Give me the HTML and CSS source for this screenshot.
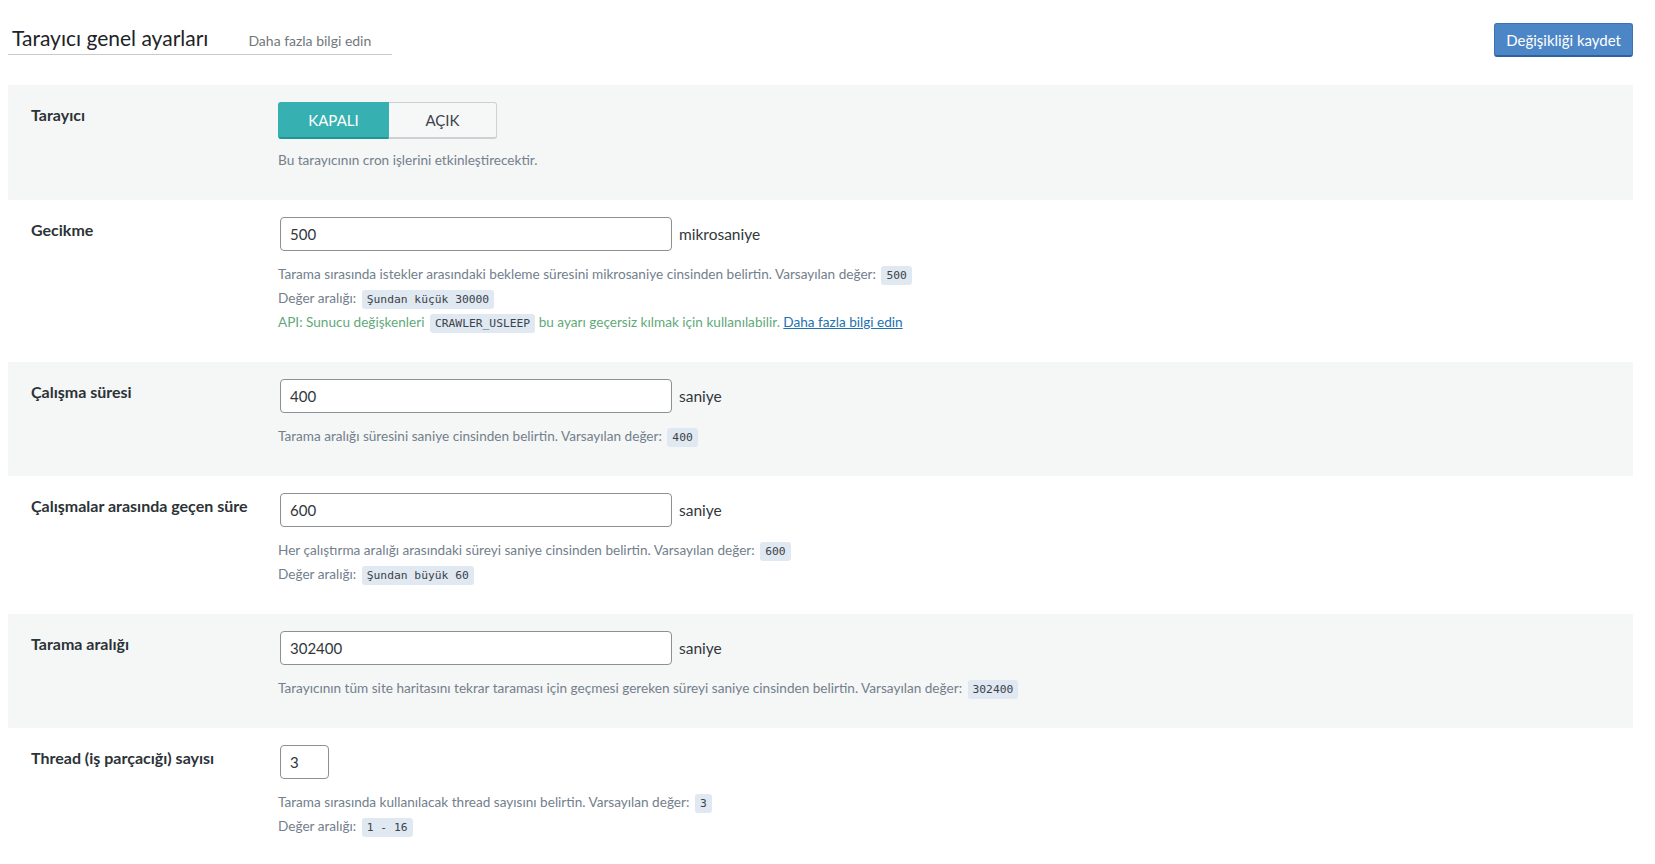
FILE: index.html
```html
<!DOCTYPE html>
<html lang="tr">
<head>
    <meta charset="UTF-8">
    <meta name="viewport" content="width=device-width, initial-scale=1.0">
    <title>Tarayıcı genel ayarları</title>
    <link rel="stylesheet" href="styles.css">
</head>
<body>
    <div class="wrap">
        <div class="page-head">
            <div class="title-bar">
                <h1>Tarayıcı genel ayarları</h1>
                <a href="#" class="learn-more">Daha fazla bilgi edin</a>
            </div>
            <button type="button" class="btn-save">Değişikliği kaydet</button>
        </div>

        <div class="setting gray">
            <div class="setting-label">Tarayıcı</div>
            <div class="setting-field">
                <div class="switch">
                    <span class="switch-opt active">KAPALI</span>
                    <span class="switch-opt">AÇIK</span>
                </div>
                <div class="desc desc-switch">
                    <p>Bu tarayıcının cron işlerini etkinleştirecektir.</p>
                </div>
            </div>
        </div>

        <div class="setting">
            <div class="setting-label">Gecikme</div>
            <div class="setting-field">
                <div class="input-line">
                    <input type="text" class="num-input" value="500">
                    <span class="unit">mikrosaniye</span>
                </div>
                <div class="desc">
                    <p>Tarama sırasında istekler arasındaki bekleme süresini mikrosaniye cinsinden belirtin. Varsayılan değer: <code>500</code></p>
                    <p>Değer aralığı: <code>Şundan küçük 30000</code></p>
                    <p class="api">API: Sunucu değişkenleri <code>CRAWLER_USLEEP</code> bu ayarı geçersiz kılmak için kullanılabilir. <a href="#">Daha fazla bilgi edin</a></p>
                </div>
            </div>
        </div>

        <div class="setting gray">
            <div class="setting-label">Çalışma süresi</div>
            <div class="setting-field">
                <div class="input-line">
                    <input type="text" class="num-input" value="400">
                    <span class="unit">saniye</span>
                </div>
                <div class="desc">
                    <p>Tarama aralığı süresini saniye cinsinden belirtin. Varsayılan değer: <code>400</code></p>
                </div>
            </div>
        </div>

        <div class="setting">
            <div class="setting-label">Çalışmalar arasında geçen süre</div>
            <div class="setting-field">
                <div class="input-line">
                    <input type="text" class="num-input" value="600">
                    <span class="unit">saniye</span>
                </div>
                <div class="desc">
                    <p>Her çalıştırma aralığı arasındaki süreyi saniye cinsinden belirtin. Varsayılan değer: <code>600</code></p>
                    <p>Değer aralığı: <code>Şundan büyük 60</code></p>
                </div>
            </div>
        </div>

        <div class="setting gray">
            <div class="setting-label">Tarama aralığı</div>
            <div class="setting-field">
                <div class="input-line">
                    <input type="text" class="num-input" value="302400">
                    <span class="unit">saniye</span>
                </div>
                <div class="desc">
                    <p>Tarayıcının tüm site haritasını tekrar taraması için geçmesi gereken süreyi saniye cinsinden belirtin. Varsayılan değer: <code>302400</code></p>
                </div>
            </div>
        </div>

        <div class="setting">
            <div class="setting-label">Thread (iş parçacığı) sayısı</div>
            <div class="setting-field">
                <div class="input-line">
                    <input type="text" class="num-input small" value="3">
                </div>
                <div class="desc">
                    <p>Tarama sırasında kullanılacak thread sayısını belirtin. Varsayılan değer: <code>3</code></p>
                    <p>Değer aralığı: <code>1 - 16</code></p>
                </div>
            </div>
        </div>
    </div>
</body>
</html>
```

FILE: styles.css
```css
* {
    box-sizing: border-box;
    margin: 0;
    padding: 0;
}

body {
    font-family: Lato, "Liberation Sans", sans-serif;
    color: #23282d;
    background-color: #fff;
}

.wrap {
    padding: 0 22px 0 8px;
}

.page-head {
    display: flex;
    justify-content: space-between;
    align-items: flex-start;
    margin-bottom: 28px;
}

.title-bar {
    display: flex;
    align-items: baseline;
    width: 384px;
    margin-top: 24px;
    padding: 0 0 3px 4px;
    border-bottom: 1px solid #c8cbcf;
}

h1 {
    font-size: 21px;
    font-weight: 400;
    line-height: 27px;
    color: #1d2327;
    margin-right: 40px;
}

.learn-more {
    font-size: 14px;
    color: #72777c;
    text-decoration: none;
}

.btn-save {
    margin-top: 23px;
    height: 34px;
    padding: 0 11px;
    font-family: inherit;
    font-size: 15px;
    color: #fff;
    background-color: #4c86c6;
    border: 1px solid #3a73b5;
    border-bottom-width: 2px;
    border-bottom-color: #2d62a0;
    border-radius: 3px;
    cursor: pointer;
}

.setting {
    display: grid;
    grid-template-columns: 270px 1fr;
    padding: 17px 0 28px;
}

.setting.gray {
    background-color: #f5f6f6;
}

.setting-label {
    padding-left: 23px;
    margin-top: 3px;
    font-size: 16px;
    font-weight: 700;
    line-height: 20px;
    color: #2c3338;
}

.switch {
    display: inline-flex;
    height: 37px;
}

.switch-opt {
    display: flex;
    align-items: center;
    justify-content: center;
    width: 108px;
    font-size: 15px;
    color: #3c434a;
    background-color: #f6f7f7;
    border: 1px solid #cdd0d4;
    border-left: none;
    border-bottom-width: 2px;
    border-radius: 0 3px 3px 0;
}

.switch-opt.active {
    width: 111px;
    color: #fff;
    background-color: #36b0b0;
    border: 1px solid #36b0b0;
    border-bottom: 2px solid #1f9696;
    border-radius: 3px 0 0 3px;
}

.input-line {
    display: flex;
    align-items: center;
}

.num-input {
    width: 392px;
    height: 34px;
    margin-left: 2px;
    padding: 0 9px;
    font-family: inherit;
    font-size: 15px;
    color: #32373c;
    border: 1px solid #8c8f94;
    border-radius: 4px;
}

.num-input.small {
    width: 49px;
}

.unit {
    margin-left: 7px;
    font-size: 15.5px;
    color: #32373c;
}

.desc {
    margin-top: 11px;
}

.desc-switch {
    margin-top: 9px;
}

.desc p {
    font-size: 13.6px;
    line-height: 24px;
    color: #73808c;
}

.desc p.api {
    color: #5fa97a;
}

.desc a {
    color: #2271b1;
}

code {
    display: inline-block;
    padding: 0 5px;
    margin-left: 2px;
    font-family: "DejaVu Sans Mono", "Liberation Mono", monospace;
    font-size: 11.3px;
    line-height: 19px;
    color: #3c434a;
    background-color: #e0e8f1;
    border-radius: 3px;
}
```
